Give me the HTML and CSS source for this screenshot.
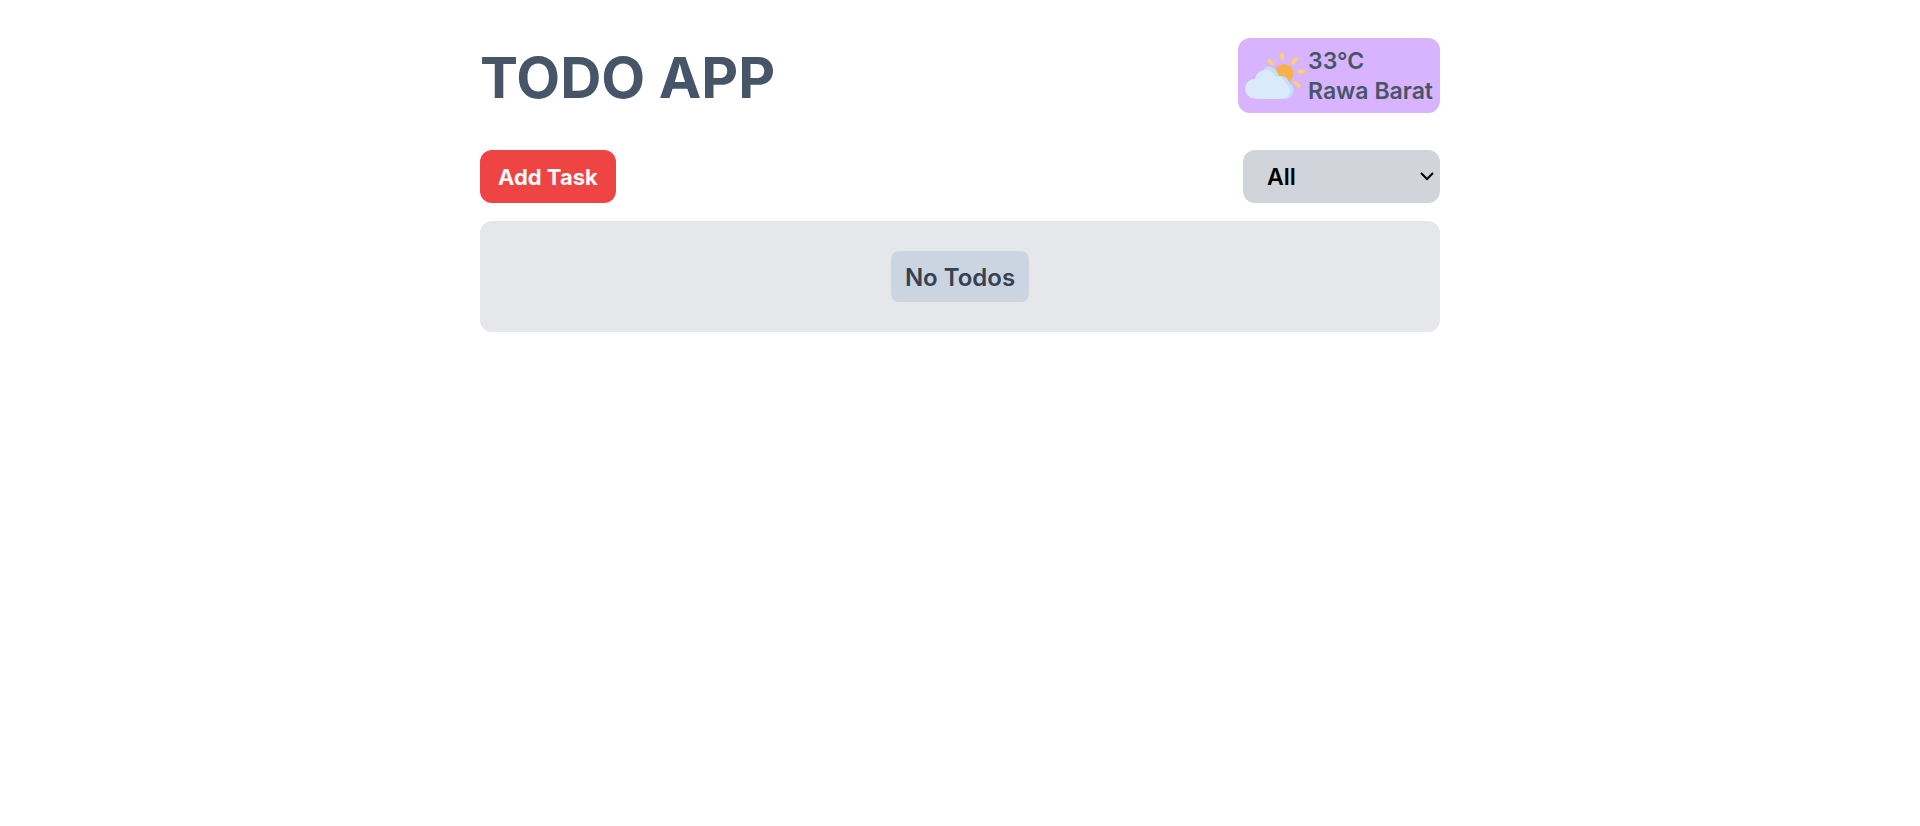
FILE: index.html
```html
<!DOCTYPE html>
<html lang="en">
<head>
  <meta charset="utf-8">
  <meta name="viewport" content="width=device-width, initial-scale=1">
  <title>Todo App</title>
  <link rel="stylesheet" href="styles.css">
</head>
<body>
  <main class="app">
    <header class="header">
      <h1 class="title">TODO APP</h1>
      <section class="weather" aria-label="Weather">
        <svg class="weather-icon" viewBox="0 0 62 60" aria-hidden="true">
          <g stroke="#ffcf69" stroke-width="3.6" stroke-linecap="round">
            <path d="M37.8 4.4l.5 4.2M52 9l-3.2 3.8M25.2 10.8l3.3 3.2M54.8 21.7l4.8-.2M51 32.7l4 3.1"/>
          </g>
          <circle cx="40" cy="23.5" r="9.5" fill="#f6b14f"/>
          <path fill="#c3e0fb" d="M16 48.7h25.5a8.4 8.4 0 0 0 3.6-15.8c-.9-5-5.3-8-10.3-6.7A11 11 0 0 0 20.5 17.3v10z"/>
          <path fill="#daeafb" d="M11 48.7a10 10 0 1 1 .2-20A10.6 10.6 0 0 1 31.5 26.3c5-.5 9 2.2 10 7.3a8 8 0 0 1-3 15.1z"/>
        </svg>
        <div class="weather-text">
          <div>33°C</div>
          <div>Rawa Barat</div>
        </div>
      </section>
    </header>
    <div class="toolbar">
      <button class="add-button" type="button">Add Task</button>
      <div class="filter">
        <select class="filter-select" aria-label="Filter tasks">
          <option>All</option>
          <option>Incomplete</option>
          <option>Completed</option>
        </select>
        <svg class="chevron" viewBox="0 0 14 9" aria-hidden="true"><path d="M1 1l6 6 6-6" fill="none" stroke="#000" stroke-width="2"/></svg>
      </div>
    </div>
    <section class="todos">
      <p class="empty">No Todos</p>
    </section>
  </main>
</body>
</html>
```
FILE: styles.css
```css
* { box-sizing: border-box; }

body {
  margin: 0;
  background: #fff;
  color: #475569;
  font-family: Inter, "Liberation Sans", sans-serif;
}

.app {
  width: 50%;
  min-width: 560px;
  margin: 0 auto;
  padding-top: 38px;
}

.header,
.toolbar {
  display: flex;
  align-items: center;
  justify-content: space-between;
}

.header { margin-bottom: 37px; }

.title {
  margin: 0;
  padding-top: 4px;
  font-size: 57px;
  line-height: 71px;
  font-weight: 700;
}

.weather {
  display: flex;
  align-items: flex-end;
  gap: 2px;
  padding: 8px 7px 7px 6px;
  border-radius: 12px;
  background: #d8b4fe;
  font-size: 23px;
  line-height: 30px;
  font-weight: 600;
}

.weather-icon {
  width: 62px;
  height: 60px;
  margin-bottom: -4px;
}

.toolbar { margin-bottom: 18px; }

.add-button,
.filter-select {
  height: 53px;
  border: 0;
  border-radius: 12px;
  font: inherit;
}

.add-button {
  padding: 0 18px;
  background: #ef4444;
  color: #f8fafc;
  font-size: 22px;
  font-weight: 700;
}

.filter { position: relative; }

.filter-select {
  display: block;
  appearance: none;
  width: 197px;
  padding: 0 32px 0 24px;
  background: #d1d5db;
  color: #000;
  font-size: 23px;
  font-weight: 600;
}

.chevron {
  position: absolute;
  top: 22px;
  right: 6px;
  width: 14px;
  height: 9px;
  pointer-events: none;
}

.todos {
  display: flex;
  justify-content: center;
  padding: 30px;
  border-radius: 12px;
  background: #e5e7eb;
}

.empty {
  margin: 0;
  padding: 11px 14px 9px;
  border-radius: 8px;
  background: #cbd5e1;
  color: #374151;
  font-size: 24px;
  line-height: 31px;
  font-weight: 600;
}
```
